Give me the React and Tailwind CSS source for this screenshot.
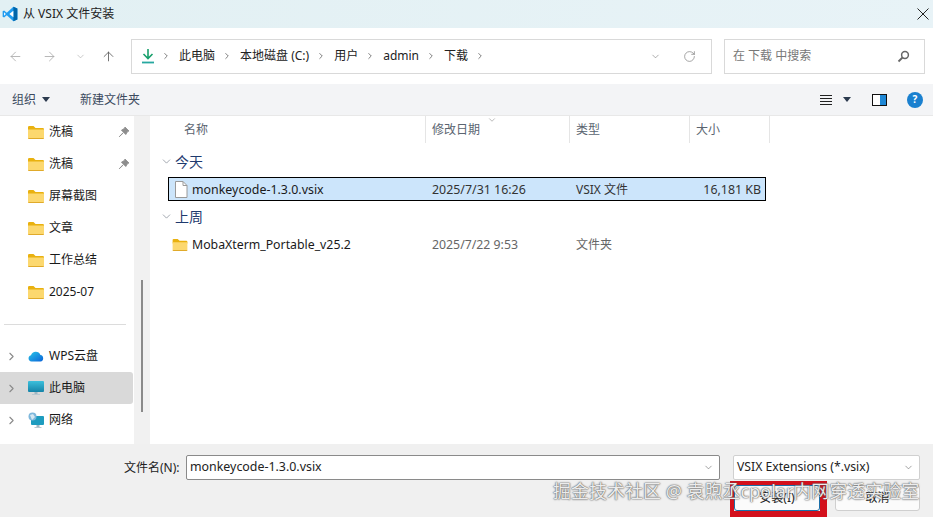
import { ArrowLeft, ArrowRight, ArrowUp, ChevronDown, ChevronRight, RotateCw } from 'lucide-react'

const FONT = "font-['Noto_Sans','Noto_Sans_CJK_SC',sans-serif]"

function VsCodeLogo() {
  return (
    <svg width="16" height="16" viewBox="0 0 100 100" aria-hidden="true">
      <path d="M71 4 L96 16 V84 L71 96 L30 58 L13 72 L4 67 V33 L13 28 L30 42 Z" fill="#1f9cf0" />
      <path d="M71 4 L96 16 V84 L71 96 Z" fill="#0065a9" />
      <path d="M71 30 L46 50 L71 70 Z" fill="#fff" />
      <path d="M13 39 V61 L24 50 Z" fill="#fff" />
    </svg>
  )
}

function Folder({ w = 16, h = 13 }) {
  return (
    <svg width={w} height={h} viewBox="0 0 16 13" aria-hidden="true" className="shrink-0">
      <path d="M0 1.2 Q0 0 1.2 0 H5.5 L7.5 2 H14.8 Q16 2 16 3.2 V5 H0 Z" fill="#e9b10f" />
      <path d="M0 3.6 H16 V11.8 Q16 13 14.8 13 H1.2 Q0 13 0 11.8 Z" fill="#fcd86f" />
      <path d="M0 12 H16 V11.8 Q16 13 14.8 13 H1.2 Q0 13 0 11.8 Z" fill="#e0aa2a" />
    </svg>
  )
}

function Pin() {
  return (
    <svg width="12" height="12" viewBox="0 0 12 12" aria-hidden="true" className="shrink-0">
      <path d="M7 1 L11 5 L9.6 5.6 L7.8 8.6 L3.4 4.2 L6.4 2.4 Z M5 6.8 L1.2 10.8 L5.2 7" fill="#8d8d8d" stroke="#8d8d8d" strokeWidth="0.8" />
    </svg>
  )
}

function Cloud() {
  return (
    <svg width="16" height="12" viewBox="0 0 16 12" aria-hidden="true">
      <defs>
        <linearGradient id="cloud" x1="0" x2="1" y1="0" y2="1">
          <stop offset="0" stopColor="#27c5e8" />
          <stop offset="1" stopColor="#0b63d8" />
        </linearGradient>
      </defs>
      <path d="M3.5 11.5 A3.2 3.2 0 0 1 3 5.2 A5 5 0 0 1 12.4 5 A3.3 3.3 0 0 1 12.5 11.5 Z" fill="url(#cloud)" />
    </svg>
  )
}

function Monitor() {
  return (
    <svg width="16" height="16" viewBox="0 0 16 16" aria-hidden="true">
      <defs>
        <linearGradient id="screen" x1="0" x2="0" y1="0" y2="1">
          <stop offset="0" stopColor="#3cc0dc" />
          <stop offset="1" stopColor="#1583a8" />
        </linearGradient>
      </defs>
      <rect x="0" y="1" width="16" height="11" rx="1" fill="url(#screen)" />
      <rect x="6.5" y="12" width="3" height="2" fill="#9fb6c2" />
      <rect x="4" y="14" width="8" height="1" fill="#b9c8d0" />
    </svg>
  )
}

function Network() {
  return (
    <svg width="16" height="17" viewBox="0 0 16 17" aria-hidden="true">
      <rect x="3" y="4" width="13" height="9" rx="1" fill="#1e9cbf" />
      <rect x="8.5" y="13" width="3" height="2" fill="#9fb6c2" />
      <rect x="6.5" y="15" width="7" height="1" fill="#b9c8d0" />
      <circle cx="4.5" cy="4.5" r="4" fill="#7fb8dc" />
      <path d="M2 3 L5 2 L7 5 L4 8 Z" fill="#d6e8f2" />
    </svg>
  )
}

function NavRow({ icon, label, pinned, chevron, active }) {
  return (
    <div className={`mr-px flex h-8 shrink-0 items-center rounded-r-[3px] ${active ? 'bg-[#d9d9d9]' : ''}`}>
      <span className="flex w-7 justify-start pl-[5px]">
        {chevron && <ChevronRight size={13} strokeWidth={2} className="text-[#8a8a8a]" />}
      </span>
      <span className="flex w-[21px] justify-start">{icon}</span>
      <span className="flex-1 whitespace-nowrap text-[12px] text-[#1a1a1a]">{label}</span>
      {pinned && <span className="pr-[3px]"><Pin /></span>}
    </div>
  )
}

function Column({ label, width, sorted }) {
  return (
    <div className={`relative flex h-[27px] shrink-0 items-center border-r border-[#e5e5e5] pl-[6px] text-[12px] text-[#5a6470] ${width}`}>
      {label}
      {sorted && (
        <ChevronDown size={10} strokeWidth={1.4} className="absolute left-[61px] top-[-1px] text-[#8a8a8a]" />
      )}
    </div>
  )
}

function GroupHeader({ label }) {
  return (
    <div className="flex h-[22px] items-center pl-[10px] text-[14px] text-[#1e3a6e]">
      <ChevronDown size={13} strokeWidth={1.3} className="mr-[2px] text-[#7d8590]" />
      {label}
    </div>
  )
}

function Crumb({ label }) {
  return (
    <>
      <span className="ml-[8px]">{label}</span>
      <ChevronRight size={10} strokeWidth={1.8} className="ml-[7px] text-[#555]" />
    </>
  )
}

export default function App() {
  return (
    <div className={`relative flex h-[517px] w-[933px] flex-col overflow-hidden bg-white ${FONT}`}>
      {/* title bar */}
      <div className="flex h-[28px] shrink-0 items-center bg-gradient-to-r from-[#e2f0f3] to-[#e8f3f7] pl-[2px] pr-[4px]">
        <VsCodeLogo />
        <span className="ml-[5px] text-[12px] text-[#222]">从 VSIX 文件安装</span>
        <svg width="12" height="12" viewBox="0 0 12 12" aria-hidden="true" className="ml-auto">
          <path d="M.5 .5 L11.5 11.5 M11.5 .5 L.5 11.5" stroke="#222" strokeWidth="1" />
        </svg>
      </div>

      {/* address row */}
      <div className="flex h-[56px] shrink-0 items-center bg-white pl-[8px] pr-[8px]">
        <ArrowLeft size={15} strokeWidth={1.3} className="text-[#a8a8a8]" />
        <ArrowRight size={15} strokeWidth={1.3} className="ml-[19px] text-[#a8a8a8]" />
        <ChevronDown size={11} strokeWidth={1.3} className="ml-[18px] text-[#a8a8a8]" />
        <ArrowUp size={15} strokeWidth={1.3} className="ml-[15px] text-[#555]" />
        <div className="ml-[15px] flex h-[35px] w-[581px] items-center border border-[#d9d9d9] pl-[9px] pr-[15px] text-[12px] text-[#222]">
          <svg width="14" height="16" viewBox="0 0 14 16" aria-hidden="true">
            <path d="M7 1 V10 M2.5 6 L7 10.5 L11.5 6" fill="none" stroke="#18a06c" strokeWidth="1.6" />
            <path d="M1 14.5 H13" stroke="#27a8a0" strokeWidth="1.8" />
          </svg>
          <ChevronRight size={10} strokeWidth={1.8} className="ml-[6px] text-[#555]" />
          <Crumb label="此电脑" />
          <Crumb label="本地磁盘 (C:)" />
          <Crumb label="用户" />
          <Crumb label="admin" />
          <Crumb label="下载" />
          <ChevronDown size={11} strokeWidth={1.3} className="ml-auto text-[#777]" />
          <RotateCw size={13} strokeWidth={1.2} className="ml-[22px] text-[#777]" />
        </div>
        <div className="ml-[12px] flex h-[35px] w-[201px] items-center border border-[#d9d9d9] pl-[8px] pr-[14px] text-[12px] text-[#777]">
          在 下载 中搜索
          <svg width="13" height="13" viewBox="0 0 13 13" aria-hidden="true" className="ml-auto">
            <circle cx="8" cy="5" r="3.4" fill="none" stroke="#666" strokeWidth="1.5" />
            <path d="M5.5 7.5 L1.5 11.5" stroke="#666" strokeWidth="1.8" />
          </svg>
        </div>
      </div>

      {/* toolbar */}
      <div className="flex h-[32px] shrink-0 items-center border-b border-[#e8e8e8] bg-[#f3f4f6] pl-[12px] pr-[10px] text-[12px] text-[#3b4a5e]">
        <span>组织</span>
        <span className="ml-[6px] h-0 w-0 border-x-[4px] border-t-[5px] border-x-transparent border-t-[#2b3a4e]" />
        <span className="ml-[30px]">新建文件夹</span>
        <svg width="14" height="12" viewBox="0 0 14 12" aria-hidden="true" className="ml-auto">
          <path d="M1 1.5 H13 M1 4.5 H13 M1 7.5 H13 M1 10.5 H13" stroke="#222" strokeWidth="1" />
        </svg>
        <span className="ml-[10px] h-0 w-0 border-x-[4px] border-t-[5px] border-x-transparent border-t-[#2b3a4e]" />
        <div className="ml-[21px] flex h-[12px] w-[15px] border border-[#111]">
          <span className="flex-1 bg-white" />
          <span className="w-[6px] bg-[#1e88d6]" />
        </div>
        <span className="ml-[20px] flex h-[16px] w-[16px] items-center justify-center rounded-full bg-[#1a80cf] text-[10px] font-bold text-white">?</span>
      </div>

      {/* body */}
      <div className="flex min-h-0 flex-1">
        <div className="flex w-[134px] shrink-0 flex-col overflow-hidden bg-white">
          <NavRow icon={<Folder />} label="洗稿" pinned />
          <NavRow icon={<Folder />} label="洗稿" pinned />
          <NavRow icon={<Folder />} label="屏幕截图" />
          <NavRow icon={<Folder />} label="文章" />
          <NavRow icon={<Folder />} label="工作总结" />
          <NavRow icon={<Folder />} label="2025-07" />
          <div className="ml-[4px] mr-[8px] mb-[15px] mt-[16px] h-px shrink-0 bg-[#dcdcdc]" />
          <NavRow icon={<Cloud />} label="WPS云盘" chevron />
          <NavRow icon={<Monitor />} label="此电脑" chevron active />
          <NavRow icon={<Network />} label="网络" chevron />
        </div>

        {/* scrollbar */}
        <div className="flex w-[16px] shrink-0 flex-col bg-[#f1f1f1] pl-[7px] pt-[164px]">
          <div className="h-[132px] w-[2px] bg-[#8a8a8a]" />
        </div>

        <div className="min-w-0 flex-1 bg-white">
          <div className="flex pl-[28px]">
            <Column label="名称" width="w-[248px]" />
            <Column label="修改日期" width="w-[144px]" sorted />
            <Column label="类型" width="w-[120px]" />
            <Column label="大小" width="w-[80px]" />
          </div>
          <div className="mt-[7px]">
            <GroupHeader label="今天" />
          </div>
          <div className="ml-[18px] mt-[5px] flex h-[24px] w-[598px] items-center border border-black bg-[#cce5fb] pt-[2px] text-[12.4px] text-[#1a1a1a]">
            <svg width="14" height="17" viewBox="0 0 14 17" aria-hidden="true" className="ml-[5px] -mt-[2px] shrink-0">
              <path d="M1.5 .5 H9 L13 4.5 V16.5 H1.5 Z" fill="#fff" stroke="#9a9a9a" />
              <path d="M9 .5 V4.5 H13" fill="none" stroke="#9a9a9a" />
            </svg>
            <span className="ml-[4px] w-[240px] shrink-0 whitespace-nowrap">monkeycode-1.3.0.vsix</span>
            <span className="w-[144px] shrink-0 text-[#333]">2025/7/31 16:26</span>
            <span className="w-[88px] shrink-0 text-[12px] text-[#333]">VSIX 文件</span>
            <span className="w-[99px] shrink-0 pr-[2px] text-right text-[#333]">16,181 KB</span>
          </div>
          <div className="mt-[4px]">
            <GroupHeader label="上周" />
          </div>
          <div className="ml-[22px] mt-[6px] flex h-[24px] items-center text-[12.3px]">
            <Folder w={16} h={12} />
            <span className="ml-[4px] w-[240px] shrink-0 whitespace-nowrap text-[#1a1a1a]">MobaXterm_Portable_v25.2</span>
            <span className="w-[144px] shrink-0 text-[#666]">2025/7/22 9:53</span>
            <span className="text-[12px] text-[#666]">文件夹</span>
          </div>
        </div>
      </div>

      {/* footer */}
      <div className="flex h-[73px] shrink-0 flex-col bg-[#f0f0f0] pl-[124px] pt-[11px] text-[12px] text-[#222]">
        <div className="flex items-center">
          <span className="w-[62px] shrink-0">文件名(N):</span>
          <div className="flex h-[25px] w-[534px] items-center rounded-[2px] border border-[#8a8a8a] bg-white pl-[3px] pr-[5px] text-[12.4px]">
            monkeycode-1.3.0.vsix
            <ChevronDown size={11} strokeWidth={1.3} className="ml-auto text-[#666]" />
          </div>
          <div className="ml-[13px] flex h-[25px] w-[187px] items-center rounded-[2px] border border-[#d0d0d0] bg-white pl-[3px] pr-[5px] text-[12.2px]">
            VSIX Extensions (*.vsix)
            <ChevronDown size={11} strokeWidth={1.3} className="ml-auto text-[#666]" />
          </div>
        </div>
        <div className="mt-[1px] flex items-start">
          <div className="ml-[606px] h-[36px] w-[97px] shrink-0 border-b-[6px] border-l-[4px] border-r-[7px] border-t-[4px] border-[#d3101c]">
            <div className="flex h-[26px] w-[86px] items-center justify-center rounded-[3px] border border-[#1b6fa8] bg-[#fbfbfb]">安装(I)</div>
          </div>
          <div className="ml-[8px] mt-[4px] flex h-[26px] w-[85px] items-center justify-center rounded-[3px] border border-[#cfcfcf] bg-[#fbfbfb]">取消</div>
        </div>
      </div>

      {/* watermark */}
      <div className="absolute left-[553px] top-[480px] whitespace-nowrap text-[18px] leading-[22px] text-[#ececec] [text-shadow:0_0_2px_#555,0_0_1px_#555]">
        掘金技术社区 @ 袁煦丞cpolar内网穿透实验室
      </div>
    </div>
  )
}
